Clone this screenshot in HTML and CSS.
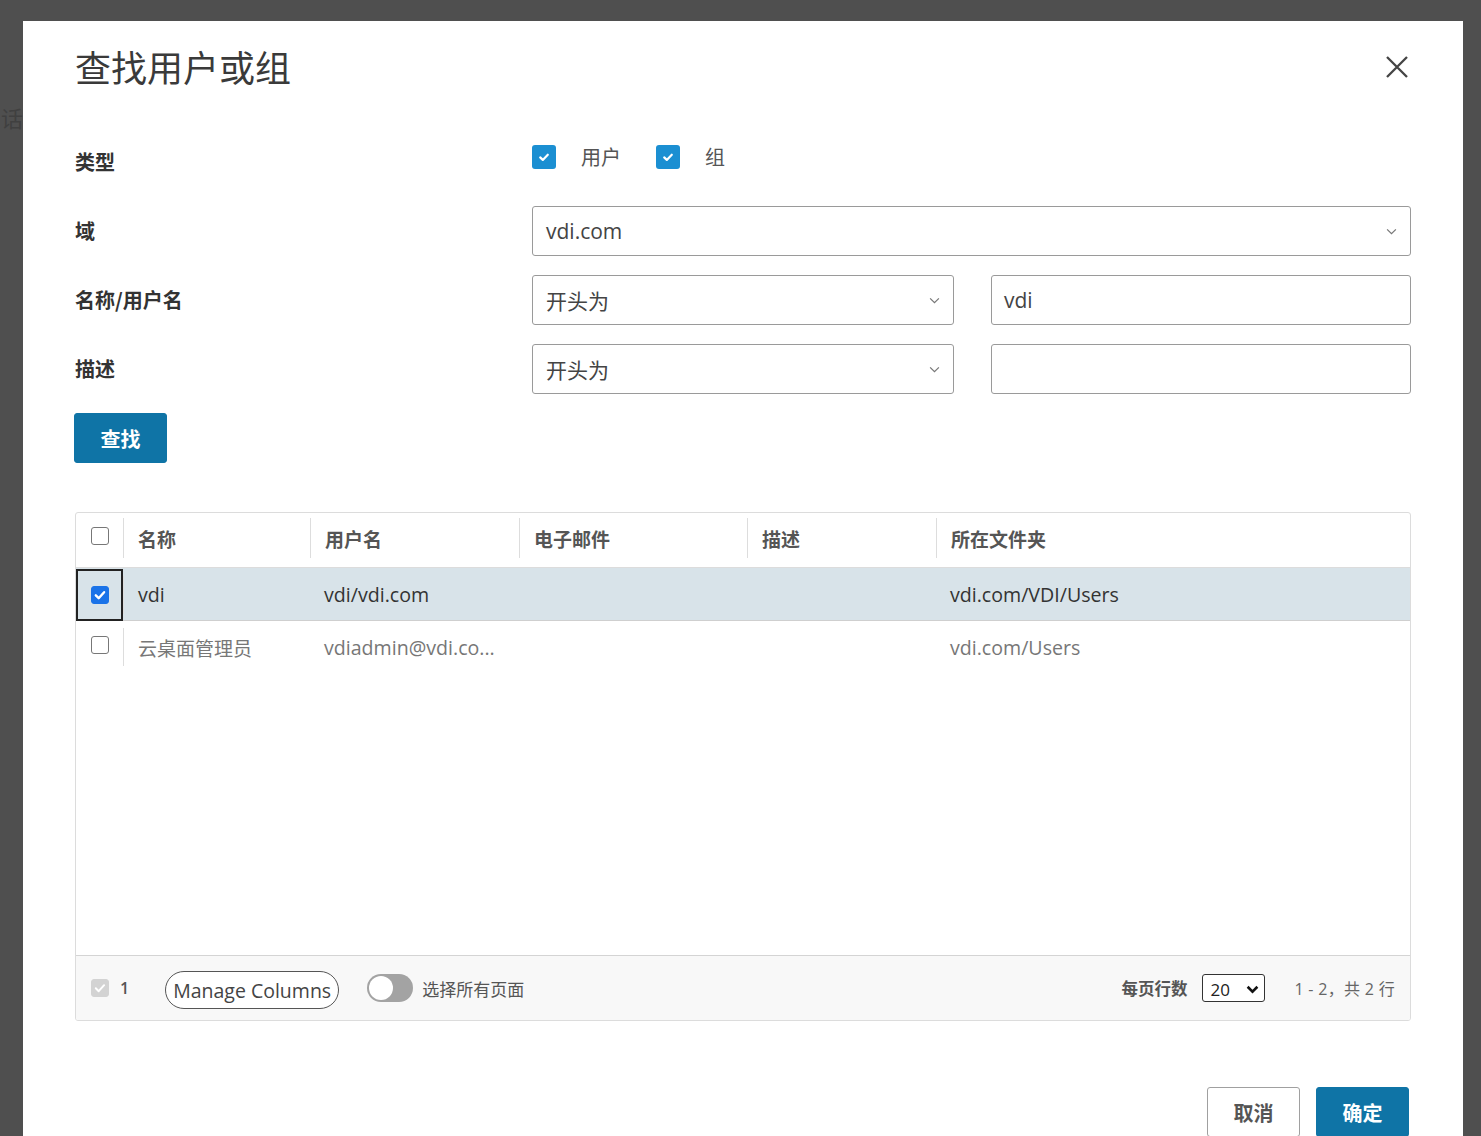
FILE: index.html
```html
<!DOCTYPE html>
<html lang="zh-CN">
<head>
  <meta charset="UTF-8">
  <meta name="viewport" content="width=device-width, initial-scale=1.0">
  <title>查找用户或组</title>
  <link rel="stylesheet" href="styles.css">
</head>
<body>
  <div class="page-behind">话</div>

  <div class="dialog">
    <div class="dialog-header">
      <h1>查找用户或组</h1>
      <button class="close-btn" aria-label="关闭">
        <svg viewBox="0 0 24 24" width="24" height="24"><path d="M2 2L22 22M22 2L2 22" stroke="#444" stroke-width="2.3" fill="none"/></svg>
      </button>
    </div>

    <!-- Sökformulär -->
    <div class="search-form">
      <div class="form-row type-row">
        <div class="form-label">类型</div>
        <div class="type-options">
          <span class="type-option">
            <span class="box-check">
              <svg viewBox="0 0 16 16"><path d="M4.2 8.4l2.6 2.5 5-5.2" fill="none" stroke="#fff" stroke-width="2.2" stroke-linecap="round" stroke-linejoin="round"/></svg>
            </span>
            用户
          </span>
          <span class="type-option">
            <span class="box-check">
              <svg viewBox="0 0 16 16"><path d="M4.2 8.4l2.6 2.5 5-5.2" fill="none" stroke="#fff" stroke-width="2.2" stroke-linecap="round" stroke-linejoin="round"/></svg>
            </span>
            组
          </span>
        </div>
      </div>

      <div class="form-row">
        <div class="form-label">域</div>
        <div class="field select-field">
          <span>vdi.com</span>
          <svg class="chev" viewBox="0 0 12 8" width="11" height="7"><path d="M1 1.5l5 5 5-5" fill="none" stroke="#777" stroke-width="1.4"/></svg>
        </div>
      </div>

      <div class="form-row">
        <div class="form-label">名称/用户名</div>
        <div class="field-pair">
          <div class="field select-field">
            <span>开头为</span>
            <svg class="chev" viewBox="0 0 12 8" width="11" height="7"><path d="M1 1.5l5 5 5-5" fill="none" stroke="#777" stroke-width="1.4"/></svg>
          </div>
          <div class="field text-field">vdi</div>
        </div>
      </div>

      <div class="form-row">
        <div class="form-label">描述</div>
        <div class="field-pair">
          <div class="field select-field">
            <span>开头为</span>
            <svg class="chev" viewBox="0 0 12 8" width="11" height="7"><path d="M1 1.5l5 5 5-5" fill="none" stroke="#777" stroke-width="1.4"/></svg>
          </div>
          <div class="field text-field"></div>
        </div>
      </div>
    </div>

    <button class="btn btn-primary find-btn">查找</button>

    <!-- Resultat -->
    <div class="result-grid">
      <div class="grid-head">
        <div class="cell cell-check"><span class="plain-check"></span></div>
        <div class="cell">名称</div>
        <div class="cell">用户名</div>
        <div class="cell">电子邮件</div>
        <div class="cell">描述</div>
        <div class="cell">所在文件夹</div>
      </div>

      <div class="grid-row selected">
        <div class="cell cell-check focused">
          <span class="plain-check checked">
            <svg viewBox="0 0 16 16"><path d="M3.8 8.3l2.9 2.9 5.4-6" fill="none" stroke="#fff" stroke-width="2.4" stroke-linecap="round" stroke-linejoin="round"/></svg>
          </span>
        </div>
        <div class="cell cell-name">vdi</div>
        <div class="cell">vdi/vdi.com</div>
        <div class="cell"></div>
        <div class="cell"></div>
        <div class="cell">vdi.com/VDI/Users</div>
      </div>

      <div class="grid-row muted">
        <div class="cell cell-check"><span class="plain-check"></span></div>
        <div class="cell cell-name">云桌面管理员</div>
        <div class="cell">vdiadmin@vdi.co...</div>
        <div class="cell"></div>
        <div class="cell"></div>
        <div class="cell">vdi.com/Users</div>
      </div>

      <div class="grid-empty"></div>

      <div class="grid-footer">
        <div class="footer-left">
          <span class="plain-check disabled">
            <svg viewBox="0 0 16 16"><path d="M3.8 8.3l2.9 2.9 5.4-6" fill="none" stroke="#fff" stroke-width="2" stroke-linecap="round" stroke-linejoin="round"/></svg>
          </span>
          <span class="selected-count">1</span>
          <button class="pill-btn">Manage Columns</button>
          <span class="toggle"><span class="knob"></span></span>
          <span class="toggle-label">选择所有页面</span>
        </div>
        <div class="footer-right">
          <span class="rows-label">每页行数</span>
          <span class="rows-select">
            20
            <svg viewBox="0 0 12 8" width="13" height="9"><path d="M1.5 1.5l4.5 4.5 4.5-4.5" fill="none" stroke="#111" stroke-width="2.4"/></svg>
          </span>
          <span class="range-info">1 - 2，共 2 行</span>
        </div>
      </div>
    </div>

    <div class="dialog-actions">
      <button class="btn btn-secondary">取消</button>
      <button class="btn btn-primary">确定</button>
    </div>
  </div>
</body>
</html>
```

FILE: styles.css
```css
/* Baslayout */
html, body {
  margin: 0;
  padding: 0;
  height: 100%;
}

body {
  font-family: 'Open Sans', 'Noto Sans CJK SC', sans-serif;
  background-color: #4f4f4f;
  padding: 21px 0 0 23px;
  box-sizing: border-box;
  overflow: hidden;
  position: relative;
}

.page-behind {
  position: absolute;
  left: 1px;
  top: 101px;
  font-size: 22px;
  color: #404040;
  font-family: 'Noto Sans CJK SC', sans-serif;
}

/* Dialog */
.dialog {
  position: relative;
  width: 1440px;
  height: 1200px;
  background-color: #ffffff;
  padding: 21px 52px 0 52px;
  box-sizing: border-box;
}

.dialog-header {
  display: flex;
  justify-content: space-between;
  align-items: center;
}

.dialog-header h1 {
  margin: 0;
  font-family: 'Noto Sans CJK SC', sans-serif;
  font-size: 36px;
  line-height: 48px;
  font-weight: 400;
  color: #3a3a3a;
}

.close-btn {
  background: none;
  border: none;
  padding: 0;
  margin-right: 2px;
  margin-top: 1px;
  width: 24px;
  height: 24px;
  cursor: pointer;
}

/* Formulär */
.search-form {
  margin-top: 47px;
  display: flex;
  flex-direction: column;
  gap: 19px;
}

.form-row {
  display: grid;
  grid-template-columns: 457px 1fr;
  align-items: center;
  height: 50px;
}

.form-label {
  font-family: 'Noto Sans CJK SC', sans-serif;
  font-size: 20px;
  font-weight: 700;
  color: #333333;
  padding-bottom: 2px;
}

.type-options {
  display: flex;
  align-items: center;
  gap: 35px;
  align-self: start;
  padding-top: 8px;
}

.type-option {
  display: flex;
  align-items: center;
  gap: 25px;
  font-family: 'Noto Sans CJK SC', sans-serif;
  font-size: 20px;
  color: #555555;
  line-height: 24px;
}

.box-check {
  width: 24px;
  height: 24px;
  border-radius: 3px;
  background-color: #1b8fd2;
  display: flex;
  align-items: center;
  justify-content: center;
}

.box-check svg {
  width: 16px;
  height: 16px;
}

.field {
  height: 50px;
  box-sizing: border-box;
  border: 1px solid #9a9a9a;
  border-radius: 3px;
  background-color: #ffffff;
  padding: 0 13px;
  display: flex;
  align-items: center;
  font-size: 21px;
  color: #444444;
}

.select-field {
  justify-content: space-between;
}

.text-field {
  padding-left: 12px;
}

.field-pair {
  display: grid;
  grid-template-columns: 422px 1fr;
  gap: 37px;
}

/* Knappar */
.btn {
  font-family: 'Noto Sans CJK SC', sans-serif;
  font-size: 20px;
  font-weight: 700;
  height: 50px;
  border-radius: 3px;
  cursor: pointer;
}

.btn-primary {
  background-color: #0f74a6;
  border: 1px solid #0f74a6;
  color: #ffffff;
}

.btn-secondary {
  background-color: #ffffff;
  border: 1px solid #a0a0a0;
  color: #555555;
}

.find-btn {
  margin-top: 19px;
  margin-left: -1px;
  width: 93px;
  display: block;
}

/* Resultattabell */
.result-grid {
  margin-top: 49px;
  height: 509px;
  border: 1px solid #dcdcdc;
  border-radius: 3px;
  display: flex;
  flex-direction: column;
  box-sizing: border-box;
  overflow: hidden;
}

.grid-head,
.grid-row {
  display: grid;
  grid-template-columns: 47px 187px 209px 228px 189px 1fr;
  align-items: center;
}

.grid-head {
  height: 55px;
  border-bottom: 1px solid #dcdcdc;
  box-sizing: border-box;
  font-family: 'Noto Sans CJK SC', sans-serif;
  font-weight: 700;
  font-size: 19px;
  color: #555555;
}

.grid-head .cell {
  height: 40px;
  border-left: 1px solid #dddddd;
  margin-top: -4px;
}

.grid-head .cell-check {
  border-left: none;
  padding-bottom: 4px;
}

.cell {
  display: flex;
  align-items: center;
  padding-left: 14px;
  box-sizing: border-box;
  white-space: nowrap;
}

.cell-check {
  padding-left: 15px;
  height: 100%;
}

.grid-row {
  height: 53px;
  border-bottom: 1px solid #cfcfcf;
  box-sizing: border-box;
  font-size: 19.6px;
  color: #333333;
}

.grid-row.selected {
  background-color: #d8e3e9;
}

.grid-row.muted {
  color: #777777;
  border-bottom: none;
  height: 52px;
}

.grid-row.muted .cell-check {
  padding-bottom: 4px;
}

.grid-row .cell-name {
  height: 38px;
  border-left: 1px solid #dddddd;
  padding-left: 14px;
}

.grid-row.muted .cell-name {
  font-family: 'Noto Sans CJK SC', sans-serif;
  font-size: 19px;
}

.cell-check.focused {
  outline: 2px solid #222222;
  outline-offset: -2px;
  height: 52px;
  margin-top: 1px;
}

.plain-check {
  width: 18px;
  height: 18px;
  box-sizing: border-box;
  border: 1px solid #777777;
  border-radius: 3px;
  background-color: #ffffff;
  display: flex;
  align-items: center;
  justify-content: center;
}

.plain-check svg {
  width: 16px;
  height: 16px;
}

.plain-check.checked {
  background-color: #1a73e8;
  border-color: #1a73e8;
}

.plain-check.disabled {
  background-color: #d3d3d3;
  border-color: #d3d3d3;
}

.grid-empty {
  flex: 1;
}

/* Tabellfot */
.grid-footer {
  height: 65px;
  border-top: 1px solid #d4d4d4;
  background-color: #f8f8f8;
  box-sizing: border-box;
  display: flex;
  justify-content: space-between;
  align-items: center;
  padding: 0 15px 0 15px;
}

.footer-left,
.footer-right {
  display: flex;
  align-items: center;
}

.selected-count {
  font-size: 16px;
  font-weight: 600;
  color: #555555;
  margin-left: 11px;
}

.pill-btn {
  margin-left: 36px;
  margin-top: 4px;
  height: 38px;
  padding: 0 7px;
  border: 1px solid #555555;
  border-radius: 19px;
  background-color: #ffffff;
  font-family: 'Open Sans', sans-serif;
  font-size: 19.5px;
  color: #444444;
  cursor: pointer;
}

.toggle {
  margin-left: 28px;
  width: 46px;
  height: 28px;
  border-radius: 14px;
  background-color: #a3a3a3;
  position: relative;
}

.toggle .knob {
  position: absolute;
  left: 2px;
  top: 2px;
  width: 24px;
  height: 24px;
  border-radius: 50%;
  background-color: #ffffff;
}

.toggle-label {
  margin-left: 9px;
  font-family: 'Noto Sans CJK SC', sans-serif;
  font-size: 17px;
  color: #555555;
}

.rows-label {
  font-family: 'Noto Sans CJK SC', sans-serif;
  font-size: 16.5px;
  font-weight: 700;
  color: #555555;
}

.rows-select {
  margin-left: 15px;
  width: 63px;
  height: 28px;
  box-sizing: border-box;
  border: 1px solid #333333;
  border-radius: 3px;
  background-color: #ffffff;
  display: flex;
  align-items: center;
  justify-content: space-between;
  padding: 2px 5px 0 7px;
  font-size: 17px;
  color: #222222;
}

.range-info {
  margin-left: 29px;
  font-size: 16px;
  color: #666666;
  letter-spacing: 0.3px;
}

/* Dialogknappar */
.dialog-actions {
  margin-top: 66px;
  display: flex;
  justify-content: flex-end;
  gap: 16px;
  padding-right: 2px;
}

.dialog-actions .btn {
  width: 93px;
}
```
